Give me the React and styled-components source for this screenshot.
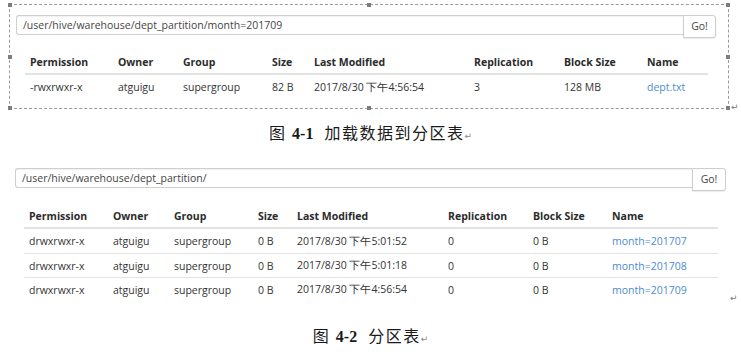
import styled, { createGlobalStyle } from "styled-components";

const GlobalStyle = createGlobalStyle`
    body {
        margin: 0;
        background: #ffffff;
        font-family: "Open Sans", "Noto Sans", sans-serif;
    }
`

const Page = styled.div`
    width: 741px;
    height: 359px;
    overflow: hidden;
    display: flex;
    flex-direction: column;
`

const FigureRow = styled.div`
    display: flex;
    align-items: flex-end;
`

const Frame = styled.div`
    position: relative;
    box-sizing: border-box;
    width: 720px;
    height: 105px;
    margin: 4px 0 0 9px;
    padding: 10px 12px 0 6px;
    border: 1px dashed #9a9a9a;
`

const Handle = styled.span`
    position: absolute;
    width: 4px;
    height: 4px;
    background: #7d7d7d;
    left: ${p => p.$x};
    top: ${p => p.$y};
    transform: translate(-50%, -50%);
`

const Mark = styled.span`
    font-family: "DejaVu Sans", sans-serif;
    font-size: 9px;
    color: #777;
    line-height: 1;
    margin: 0 0 ${p => p.$lift || 0}px ${p => p.$gap || 2}px;
`

const Browser = styled.div`
    padding: ${p => p.$pad || "0"};
`

const SearchBar = styled.div`
    display: flex;
    align-items: flex-start;
    width: ${p => p.$w}px;
`

const PathInput = styled.div`
    flex: 1;
    box-sizing: border-box;
    height: 20px;
    border: 1px solid #cfcfcf;
    border-right: none;
    border-radius: 3px 0 0 3px;
    box-shadow: inset 0 1px 1px rgba(0, 0, 0, 0.06);
    padding-left: 6px;
    font-size: 10.5px;
    line-height: 18px;
    color: #444;
`

const GoButton = styled.div`
    box-sizing: border-box;
    width: ${p => p.$w}px;
    height: 23px;
    border: 1px solid #cdcdcd;
    border-radius: 0 3px 3px 0;
    box-shadow: 0 1px 1px rgba(0, 0, 0, 0.08);
    background: #fff;
    font-size: 10.5px;
    line-height: 20px;
    text-align: center;
    color: #444;
`

const Table = styled.table`
    border-collapse: collapse;
    table-layout: fixed;
    margin: ${p => p.$m};
    font-size: 10.5px;
    color: #333;

    th, td {
        padding: 0 0 0 5px;
        height: 24px;
        text-align: left;
        white-space: nowrap;
        overflow: hidden;
    }
    th {
        height: 23px;
        font-weight: 700;
        border-bottom: 2px solid #e2e2e2;
        color: #2b2b2b;
    }
    tbody tr + tr td {
        height: 23px;
        border-top: 1px solid #e2e2e2;
    }
`

const Link = styled.span`
    color: #4d8bcf;
`

const Caption = styled.div`
    text-align: center;
    font-family: "Liberation Serif", "Noto Sans CJK SC", serif;
    font-size: 16px;
    letter-spacing: 1.5px;
    color: #1a1a1a;
    margin-top: ${p => p.$top}px;

    b {
        font-weight: 700;
        letter-spacing: 0;
    }
`

const CapMark = styled.span`
    font-family: "DejaVu Sans", sans-serif;
    font-size: 9px;
    letter-spacing: 0;
    color: #888;
`

const heads = ["Permission", "Owner", "Group", "Size", "Last Modified", "Replication", "Block Size", "Name"]

const TableView = ({ widths, rows, margin }) => (
    <Table $m={margin} style={{ width: widths.reduce((a, b) => a + b, 0) }}>
        <colgroup>
            {widths.map((w, i) => <col key={i} style={{ width: w }} />)}
        </colgroup>
        <thead>
            <tr>{heads.map(h => <th key={h}>{h}</th>)}</tr>
        </thead>
        <tbody>
            {rows.map((r, i) => (
                <tr key={i}>
                    {r.map((c, j) => (
                        <td key={j}>{j === 7 ? <Link>{c}</Link> : c}</td>
                    ))}
                </tr>
            ))}
        </tbody>
    </Table>
)

const handles = [
    ["0%", "0%"], ["50%", "0%"], ["100%", "0%"],
    ["0%", "50%"], ["100%", "50%"],
    ["0%", "100%"], ["50%", "100%"], ["100%", "100%"],
]

const App = () => {
    const rows1 = [["-rwxrwxr-x", "atguigu", "supergroup", "82 B", "2017/8/30 下午4:56:54", "3", "128 MB", "dept.txt"]]
    const rows2 = [
        ["drwxrwxr-x", "atguigu", "supergroup", "0 B", "2017/8/30 下午5:01:52", "0", "0 B", "month=201707"],
        ["drwxrwxr-x", "atguigu", "supergroup", "0 B", "2017/8/30 下午5:01:18", "0", "0 B", "month=201708"],
        ["drwxrwxr-x", "atguigu", "supergroup", "0 B", "2017/8/30 下午4:56:54", "0", "0 B", "month=201709"],
    ]

    return (
        <Page>
            <GlobalStyle />
            <FigureRow>
                <Frame>
                    {handles.map(([x, y], i) => <Handle key={i} $x={x} $y={y} />)}
                    <SearchBar $w={700}>
                        <PathInput>/user/hive/warehouse/dept_partition/month=201709</PathInput>
                        <GoButton $w={33}>Go!</GoButton>
                    </SearchBar>
                    <TableView
                        margin="12px 0 0 9px"
                        widths={[88, 65, 89, 42, 160, 90, 83, 66]}
                        rows={rows1}
                    />
                </Frame>
                <Mark $gap={2} $lift={-3}>↵</Mark>
            </FigureRow>
            <Caption $top={11}>
                图 <b>4-1</b>&nbsp; 加载数据到分区表<CapMark>↵</CapMark>
            </Caption>
            <FigureRow>
                <Browser $pad="24px 0 0 15px">
                    <SearchBar $w={711}>
                        <PathInput>/user/hive/warehouse/dept_partition/</PathInput>
                        <GoButton $w={34}>Go!</GoButton>
                    </SearchBar>
                    <TableView
                        margin="13px 0 0 9px"
                        widths={[84, 61, 84, 39, 151, 85, 79, 111]}
                        rows={rows2}
                    />
                </Browser>
                <Mark $gap={4} $lift={-2}>↵</Mark>
            </FigureRow>
            <Caption $top={22}>
                图 <b>4-2</b>&nbsp; 分区表<CapMark>↵</CapMark>
            </Caption>
        </Page>
    )
}

export default App;
